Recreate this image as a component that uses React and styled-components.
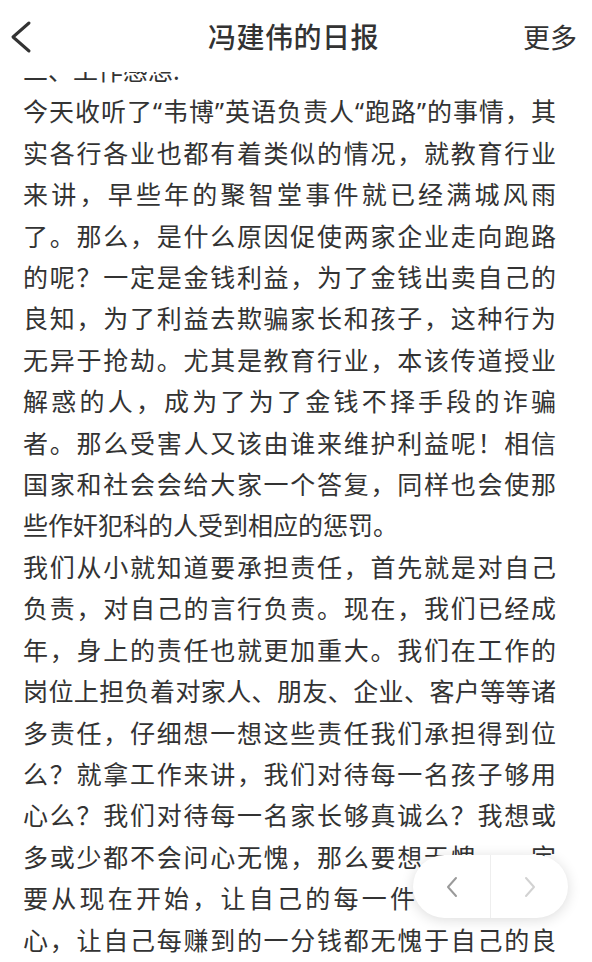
import React from "react";
import styled, { createGlobalStyle } from "styled-components";

const GlobalStyle = createGlobalStyle`
  html, body {
    margin: 0;
    padding: 0;
    background: #fff;
  }
  body {
    font-family: "Noto Sans", "Noto Sans CJK SC", sans-serif;
    color: #333;
  }
`;

const Page = styled.div`
  position: relative;
  width: 592px;
  height: 962px;
  overflow: hidden;
  background: #fff;
  display: flex;
  flex-direction: column;
`;

const Header = styled.header`
  height: 72px;
  flex-shrink: 0;
  display: grid;
  grid-template-columns: 1fr auto 1fr;
  align-items: center;
  padding: 0 15px 0 10px;
  background: #fff;
`;

const BackButton = styled.div`
  display: flex;
  align-items: center;
  justify-self: start;
  padding-top: 2px;
`;

const Title = styled.h1`
  margin: 0;
  font-size: 28px;
  font-weight: 500;
  color: #333;
  letter-spacing: 0.5px;
`;

const More = styled.div`
  justify-self: end;
  font-size: 27px;
  color: #333;
`;

const Viewport = styled.main`
  flex: 1;
  overflow: hidden;
`;

const Article = styled.article`
  margin-top: -22px;
  padding: 0 36px 0 23px;
`;

const Paragraph = styled.div`
  font-size: 25px;
  line-height: 41.4px;
`;

const Line = styled.div`
  text-align: ${(p) => (p.$last ? "left" : "justify")};
  text-align-last: ${(p) => (p.$last ? "left" : "justify")};
  white-space: nowrap;
`;

const Pager = styled.div`
  position: absolute;
  right: 24px;
  bottom: 44px;
  width: 155px;
  height: 63px;
  border-radius: 32px;
  background: #fff;
  box-shadow: 0 2px 14px rgba(0, 0, 0, 0.14);
  display: flex;
  align-items: center;
`;

const PagerButton = styled.div`
  flex: 1;
  height: 100%;
  display: flex;
  align-items: center;
  justify-content: center;
  color: ${(p) => (p.$disabled ? "#d2d2d2" : "#9a9a9a")};
`;

const Divider = styled.div`
  width: 1px;
  height: 100%;
  background: #eeeeee;
`;

const Chevron = ({ dir = "left", w = 12, h = 22, stroke = 2, color = "currentColor" }) => (
  <svg width={w} height={h} viewBox={`0 0 ${w} ${h}`} fill="none">
    <polyline
      points={
        dir === "left"
          ? `${w - stroke},${stroke} ${stroke},${h / 2} ${w - stroke},${h - stroke}`
          : `${stroke},${stroke} ${w - stroke},${h / 2} ${stroke},${h - stroke}`
      }
      stroke={color}
      strokeWidth={stroke}
      strokeLinecap="round"
      strokeLinejoin="round"
    />
  </svg>
);

const paragraphs = [
  {
    lines: ["二、工作感想:"],
    heading: true,
  },
  {
    lines: [
      "今天收听了“韦博”英语负责人“跑路”的事情，其",
      "实各行各业也都有着类似的情况，就教育行业",
      "来讲，早些年的聚智堂事件就已经满城风雨",
      "了。那么，是什么原因促使两家企业走向跑路",
      "的呢？一定是金钱利益，为了金钱出卖自己的",
      "良知，为了利益去欺骗家长和孩子，这种行为",
      "无异于抢劫。尤其是教育行业，本该传道授业",
      "解惑的人，成为了为了金钱不择手段的诈骗",
      "者。那么受害人又该由谁来维护利益呢！相信",
      "国家和社会会给大家一个答复，同样也会使那",
      "些作奸犯科的人受到相应的惩罚。",
    ],
  },
  {
    lines: [
      "我们从小就知道要承担责任，首先就是对自己",
      "负责，对自己的言行负责。现在，我们已经成",
      "年，身上的责任也就更加重大。我们在工作的",
      "岗位上担负着对家人、朋友、企业、客户等等诸",
      "多责任，仔细想一想这些责任我们承担得到位",
      "么？就拿工作来讲，我们对待每一名孩子够用",
      "心么？我们对待每一名家长够真诚么？我想或",
      "多或少都不会问心无愧，那么要想无愧，一定",
      "要从现在开始，让自己的每一件事都做到用",
      "心，让自己每赚到的一分钱都无愧于自己的良",
    ],
    open: true,
  },
];

export default function App() {
  return (
    <Page>
      <GlobalStyle />
      <Header>
        <BackButton>
          <Chevron dir="left" w={22} h={34} stroke={3} color="#333" />
        </BackButton>
        <Title>冯建伟的日报</Title>
        <More>更多</More>
      </Header>
      <Viewport>
        <Article>
          {paragraphs.map((para, i) => (
            <Paragraph key={i}>
              {para.lines.map((text, j) => {
                const isLast = j === para.lines.length - 1 && !para.open;
                return (
                  <Line key={j} $last={isLast}>
                    {text}
                  </Line>
                );
              })}
            </Paragraph>
          ))}
        </Article>
      </Viewport>
      <Pager>
        <PagerButton>
          <Chevron dir="left" />
        </PagerButton>
        <Divider />
        <PagerButton $disabled>
          <Chevron dir="right" />
        </PagerButton>
      </Pager>
    </Page>
  );
}
